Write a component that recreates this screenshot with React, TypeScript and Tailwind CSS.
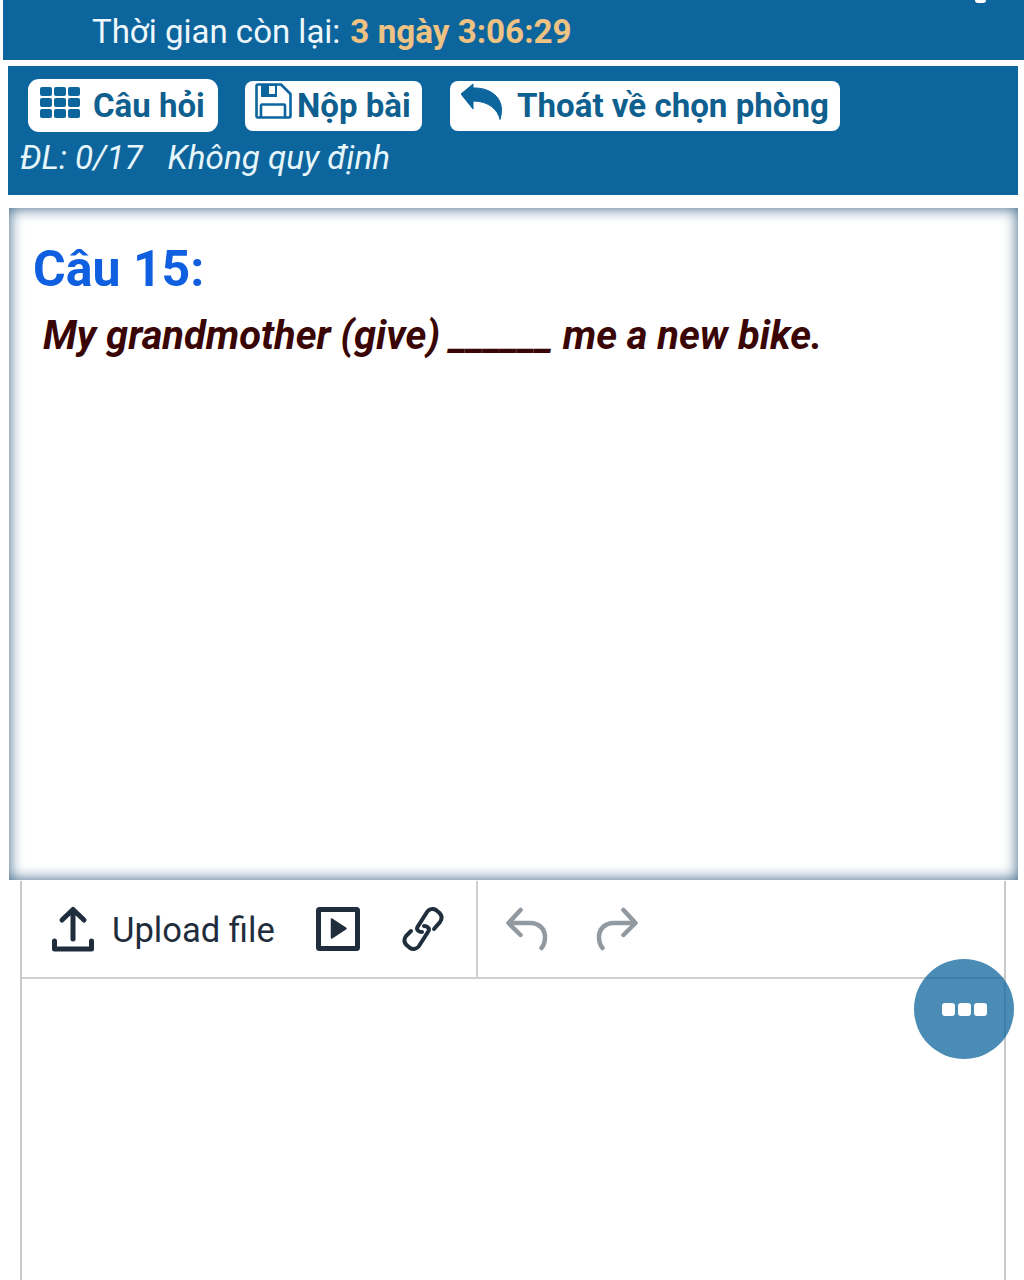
import React from 'react';

const BLUE = '#0d659d';

const GridIcon = () => (
  <svg width="40" height="31" viewBox="0 0 40 31" fill={BLUE} className="mb-[7px]">
    {[0, 11, 22].map(y =>
      [0, 14, 28].map(x => <rect key={`${x}-${y}`} x={x} y={y} width="12" height="9" rx="2" />)
    )}
  </svg>
);

const SaveIcon = () => (
  <svg width="37" height="36" viewBox="0 0 37 36" fill="none" stroke={BLUE} strokeWidth="2.600" strokeLinejoin="round" className="mb-[9px]">
    <path d="M1.500 3C1.500 2 2 1.500 3 1.500H26L35.500 11V33C35.500 34 35 34.500 34 34.500H3C2 34.500 1.500 34 1.500 33Z" />
    <path d="M6 1.500H22V14H6Z" fill={BLUE} stroke="none" />
    <rect x="14" y="3" width="6" height="8" fill="#fff" stroke="none" />
    <path d="M6 34.500V22.500C6 22 6.500 21.500 7 21.500H29C29.500 21.500 30 22 30 22.500V34.500" />
  </svg>
);

const ReplyIcon = () => (
  <svg width="41" height="37" viewBox="0 0 41 37" fill={BLUE} className="mb-[8px]">
    <path d="M0 11L12 1V5C28 4.500 40 13 40.500 26C40.500 30 40 33 39 36.500C37 27 28 18 12 18V26Z" stroke={BLUE} strokeWidth="1" strokeLinejoin="round" />
  </svg>
);

const UploadIcon = () => (
  <svg width="42" height="46" viewBox="0 0 42 46" fill="none" stroke="#1f2d3d" strokeWidth="5" strokeLinecap="round" strokeLinejoin="round">
    <path d="M21 33V3.500M10 14L21 3.500L32 14" />
    <path d="M2.500 35V43H39.500V35" />
  </svg>
);

const PlayBoxIcon = () => (
  <svg width="44" height="44" viewBox="0 0 44 44">
    <rect x="2.500" y="2.500" width="39" height="39" rx="1" fill="none" stroke="#1f2d3d" strokeWidth="5" />
    <path d="M15.500 12V31L30 21.500Z" fill="#1f2d3d" stroke="#1f2d3d" strokeWidth="1.500" strokeLinejoin="round" />
  </svg>
);

const LinkIcon = () => (
  <svg width="46" height="46" viewBox="5 5 46 46" fill="none" stroke="#1f2d3d" strokeWidth="4" strokeLinecap="round">
    <path d="M27 31C24 31 21 29 22.500 26L32 11C34 8 38 7 41 9L44.500 12C47 14.500 47 18 45 21L39 28" />
    <path d="M29 25C32 25 35 27 33.500 30L24 45C22 48 18 49 15 47L11.500 44C9 41.500 9 38 11 35L16 30" />
  </svg>
);

const UndoIcon = ({ flip }: { flip?: boolean }) => (
  <svg width="42" height="44" viewBox="0 0 42 44" fill="none" stroke="#929aa1" strokeWidth="4.500" strokeLinecap="round" strokeLinejoin="round" className={flip ? '-scale-x-100' : ''}>
    <path d="M14.500 3L2.500 16L14.500 28" />
    <path d="M3 16H24C33 16 39 22 39 30C39 34 38 38 35.500 41" />
  </svg>
);

export default function App() {
  return (
    <div className="relative h-[1280px] w-full overflow-hidden bg-white font-['Roboto',sans-serif]">
      {/* thanh thời gian */}
      <div className="relative ml-[3px] flex h-[60px] items-center bg-[#0d659d] pl-[89px] pt-[3px] text-[33px] text-[#eef7fb]">
        <span>Thời gian còn lại:</span>
        <span className="ml-[10px] text-[33.2px] font-bold text-[#eec283]">3 ngày 3:06:29</span>
        <div className="absolute right-[38px] top-0 h-[3px] w-[11px] rounded-b-sm bg-white" />
      </div>

      <div className="ml-[8px] mr-[6px] mt-[6px] h-[129px] bg-[#0d659d]">
        <div className="flex items-center pl-[20px] pt-[13px] text-[33px] font-bold leading-none text-[#0f5f8f]">
          <button className="flex h-[53px] w-[190px] items-center rounded-[11px] bg-white pl-[12px]">
            <GridIcon />
            <span className="ml-[13px]">Câu hỏi</span>
          </button>
          <button className="ml-[27px] flex h-[50px] w-[177px] items-center rounded-[8px] bg-white pl-[10px]">
            <SaveIcon />
            <span className="ml-[5px]">Nộp bài</span>
          </button>
          <button className="ml-[28px] flex h-[50px] w-[390px] items-center rounded-[8px] bg-white pl-[11px]">
            <ReplyIcon />
            <span className="ml-[15px] text-[33.1px]">Thoát về chọn phòng</span>
          </button>
        </div>
        <div className="mt-[6px] flex pl-[12px] text-[33.2px] italic leading-[40px] text-[#e6f6fb]">
          <span>ĐL: 0/17</span>
          <span className="ml-[25px]">Không quy định</span>
        </div>
      </div>

      {/* câu hỏi */}
      <div className="ml-[9px] mr-[6px] mt-[13px] h-[672px] bg-white pl-[24px] pt-[31px] shadow-[inset_0_0_14px_1px_#4a7090]">
        <h2 className="text-[50px] font-bold leading-[60px] text-[#0f5fe0]">Câu 15:</h2>
        <p className="ml-[10px] mt-[12px] text-[39.85px] font-bold italic leading-[50px] text-[#3a0505]">
          My grandmother (give) ______ me a new bike.
        </p>
      </div>

      {/* trình soạn thảo */}
      <div className="ml-[20px] mr-[18px] mt-[1px] h-[400px] border-x-2 border-[#c9c9c9]">
        <div className="flex h-[98px] border-b-2 border-[#cfcfcf]">
          <div className="flex w-[456px] items-center border-r-2 border-[#cfcfcf] pl-[30px]">
            <UploadIcon />
            <span className="ml-[18px] pt-[4px] text-[34.6px] text-[#1f2d3d]">Upload file</span>
            <span className="ml-[41px]"><PlayBoxIcon /></span>
            <span className="ml-[40px]"><LinkIcon /></span>
          </div>
          <div className="flex items-center gap-[48px] pl-[28px]">
            <UndoIcon />
            <UndoIcon flip />
          </div>
        </div>
      </div>

      <div className="absolute left-[914px] top-[959px] flex h-[100px] w-[100px] items-center justify-center gap-[3px] rounded-full bg-[#0d659d]/75">
        <span className="h-[13px] w-[13px] rounded-[3px] bg-white" />
        <span className="h-[13px] w-[13px] rounded-[3px] bg-white" />
        <span className="h-[13px] w-[13px] rounded-[3px] bg-white" />
      </div>
    </div>
  );
}
